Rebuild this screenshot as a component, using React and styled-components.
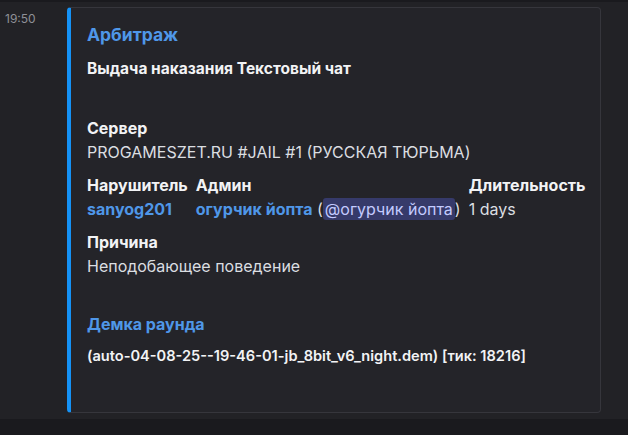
import React from "react";
import styled, { createGlobalStyle } from "styled-components";

const Global = createGlobalStyle`
  html, body { margin: 0; padding: 0; background: #1a1a1e; }
  body { font-family: Inter, "Noto Sans", sans-serif; -webkit-font-smoothing: antialiased; }
  * { box-sizing: border-box; }
`;

const Page = styled.div`
  width: 628px;
  height: 435px;
  background: #1a1a1e;
  padding-top: 2px;
`;

const MessageRow = styled.div`
  display: flex;
  align-items: flex-start;
  background: #222226;
  height: 417px;
  padding-top: 5px;
`;

const Time = styled.div`
  width: 67px;
  padding-left: 5px;
  padding-top: 4px;
  font-size: 12px;
  line-height: 16px;
  color: #8e9097;
`;

const Embed = styled.div`
  width: 534px;
  height: 406px;
  background: #242429;
  border: 1px solid #36363c;
  border-left: 4px solid #1592f6;
  border-radius: 4px;
  padding: 15px 16px 0 16px;
`;

const Title = styled.div`
  font-size: 17.5px;
  line-height: 24px;
  font-weight: 700;
  color: #4f97e8;
  margin-bottom: 11px;
`;

const Description = styled.div`
  font-size: 15.5px;
  line-height: 22px;
  font-weight: 700;
  color: #f2f3f5;
  margin-bottom: 37px;
`;

const Fields = styled.div`
  display: flex;
  flex-direction: column;
  gap: 11px;
`;

const InlineRow = styled.div`
  display: flex;
  gap: 8px;
`;

const Field = styled.div`
  display: flex;
  flex-direction: column;
  gap: 2px;
`;

const FieldName = styled.div`
  font-size: 16px;
  line-height: 22px;
  font-weight: 700;
  color: ${(p) => (p.$link ? "#4f97e8" : "#f2f3f5")};
  white-space: nowrap;
`;

const FieldValue = styled.div`
  font-size: ${(p) => (p.$bold ? "14.6px" : "16px")};
  line-height: 22px;
  font-weight: ${(p) => (p.$bold ? 600 : 400)};
  color: ${(p) => (p.$bold ? "#f2f3f5" : "#dbdee1")};
  white-space: nowrap;
`;

const Link = styled.span`
  color: #4f97e8;
  font-weight: 700;
`;

const Mention = styled.span`
  background: #363a6a;
  color: #c3cbff;
  border-radius: 3px;
  padding: 1px 2px;
`;

const Demo = styled.div`
  margin-top: 36px;
  display: flex;
  flex-direction: column;
  gap: 10px;
`;

export default function App() {
  return (
    <>
      <Global />
      <Page>
        <MessageRow>
          <Time>19:50</Time>
          <Embed>
            <Title>Арбитраж</Title>
            <Description>Выдача наказания Текстовый чат</Description>
            <Fields>
              <Field>
                <FieldName>Сервер</FieldName>
                <FieldValue>PROGAMESZET.RU #JAIL #1 (РУССКАЯ ТЮРЬМА)</FieldValue>
              </Field>
              <InlineRow>
                <Field>
                  <FieldName>Нарушитель</FieldName>
                  <FieldValue>
                    <Link>sanyog201</Link>
                  </FieldValue>
                </Field>
                <Field>
                  <FieldName>Админ</FieldName>
                  <FieldValue>
                    <Link>огурчик йопта</Link> (<Mention>@огурчик йопта</Mention>)
                  </FieldValue>
                </Field>
                <Field>
                  <FieldName>Длительность</FieldName>
                  <FieldValue>1 days</FieldValue>
                </Field>
              </InlineRow>
              <Field>
                <FieldName>Причина</FieldName>
                <FieldValue>Неподобающее поведение</FieldValue>
              </Field>
            </Fields>
            <Demo>
              <FieldName $link>Демка раунда</FieldName>
              <FieldValue $bold>
                (auto-04-08-25--19-46-01-jb_8bit_v6_night.dem) [тик: 18216]
              </FieldValue>
            </Demo>
          </Embed>
        </MessageRow>
      </Page>
    </>
  );
}
